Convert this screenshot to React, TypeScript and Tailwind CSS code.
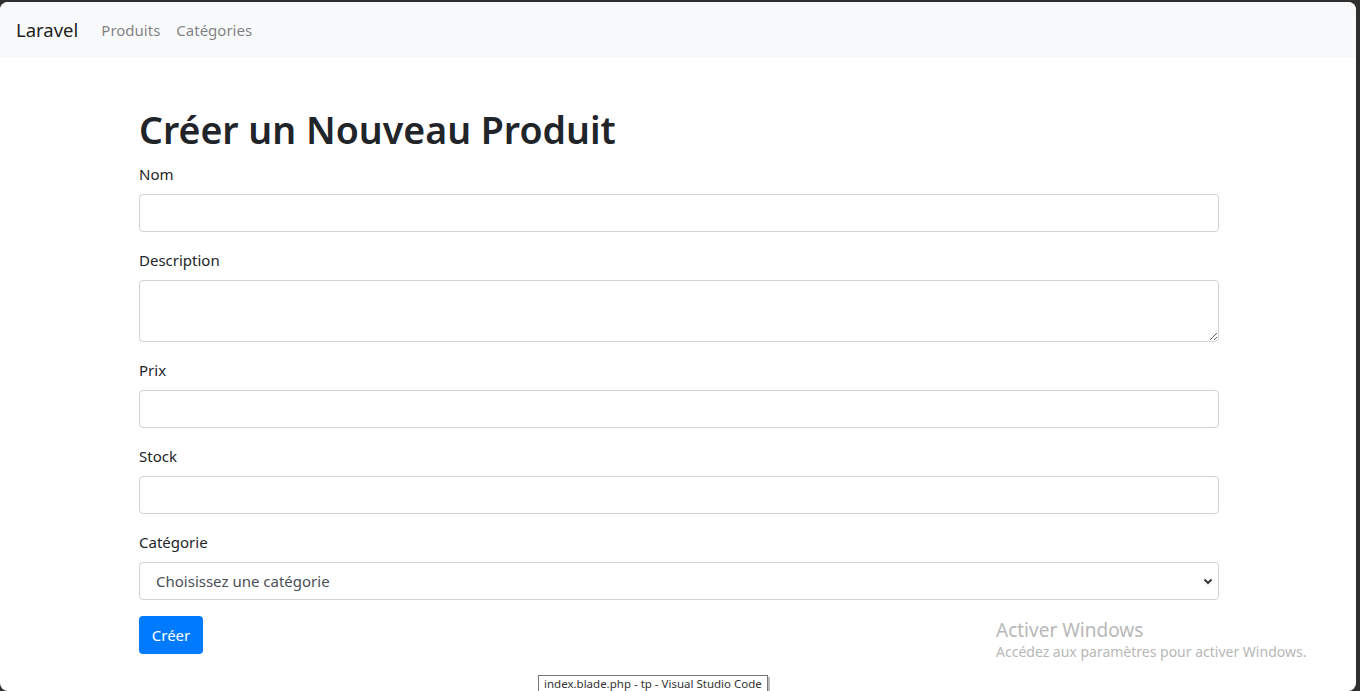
const fields = [
  { label: "Nom", type: "input" },
  { label: "Description", type: "textarea" },
  { label: "Prix", type: "input" },
  { label: "Stock", type: "input" },
];

const inputCls =
  "block w-full h-[38px] rounded-[4px] border border-[#ced4da] bg-white px-3 text-[15px] text-[#495057] outline-none";

export default function App() {
  return (
    <div className="h-[691px] w-[1360px] overflow-hidden bg-[#2f2f2f] pt-[2px] pr-[4px] font-['Noto_Sans',sans-serif]">
      <div className="relative h-[689px] overflow-hidden rounded-lg bg-white text-[#212529]">
        <nav className="flex h-[56px] items-center bg-[#f8f9fa] px-4">
          <span className="mr-[15px] text-[18.5px] leading-[30px] text-black/90">Laravel</span>
          <a className="px-2 text-[15px] text-black/50">Produits</a>
          <a className="px-2 text-[15px] text-black/50">Catégories</a>
        </nav>

        <div className="ml-[139px] w-[1080px] pt-12">
          <h1 className="mb-2 text-[37.5px] font-semibold leading-[48px]">
            Créer un Nouveau Produit
          </h1>
          <form>
            {fields.map((f) => (
              <div key={f.label} className="mb-4">
                <label className="mb-2 block text-[15px] leading-6">{f.label}</label>
                {f.type === "textarea" ? (
                  <textarea
                    rows={2}
                    className="block h-[62px] w-full rounded-[4px] border border-[#ced4da] bg-white px-3 py-1.5 text-[15px] outline-none"
                  />
                ) : (
                  <input className={inputCls} />
                )}
              </div>
            ))}
            <div className="mb-4">
              <label className="mb-2 block text-[15px] leading-6">Catégorie</label>
              <div className="relative">
                <div className={inputCls + " flex items-center"}>
                  <span className="pl-[4px]">Choisissez une catégorie</span>
                </div>
                <svg
                  className="absolute right-[6px] top-[15px] h-[9px] w-[10px] text-[#343a40]"
                  viewBox="0 0 10 9"
                  fill="none"
                  stroke="currentColor"
                  strokeWidth={2}
                >
                  <path d="M1.5 2.5l3.5 3.5 3.5-3.5" />
                </svg>
              </div>
            </div>
            <button
              type="button"
              className="h-[38px] w-[64px] rounded-[4px] bg-[#007bff] text-[15px] text-white"
            >
              Créer
            </button>
          </form>
        </div>

        <div className="absolute left-[996px] top-[616px] text-[#b8b8b8]">
          <div className="text-[19px] leading-6">Activer Windows</div>
          <div className="text-[14px] leading-5">Accédez aux paramètres pour activer Windows.</div>
        </div>

        <div className="absolute left-[538px] top-[673px] border border-[#767676] bg-white px-[5px] text-[11.5px] leading-[16px] text-[#333] shadow-[2px_2px_0_#bbb]">
          index.blade.php - tp - Visual Studio Code
        </div>
      </div>
    </div>
  );
}
